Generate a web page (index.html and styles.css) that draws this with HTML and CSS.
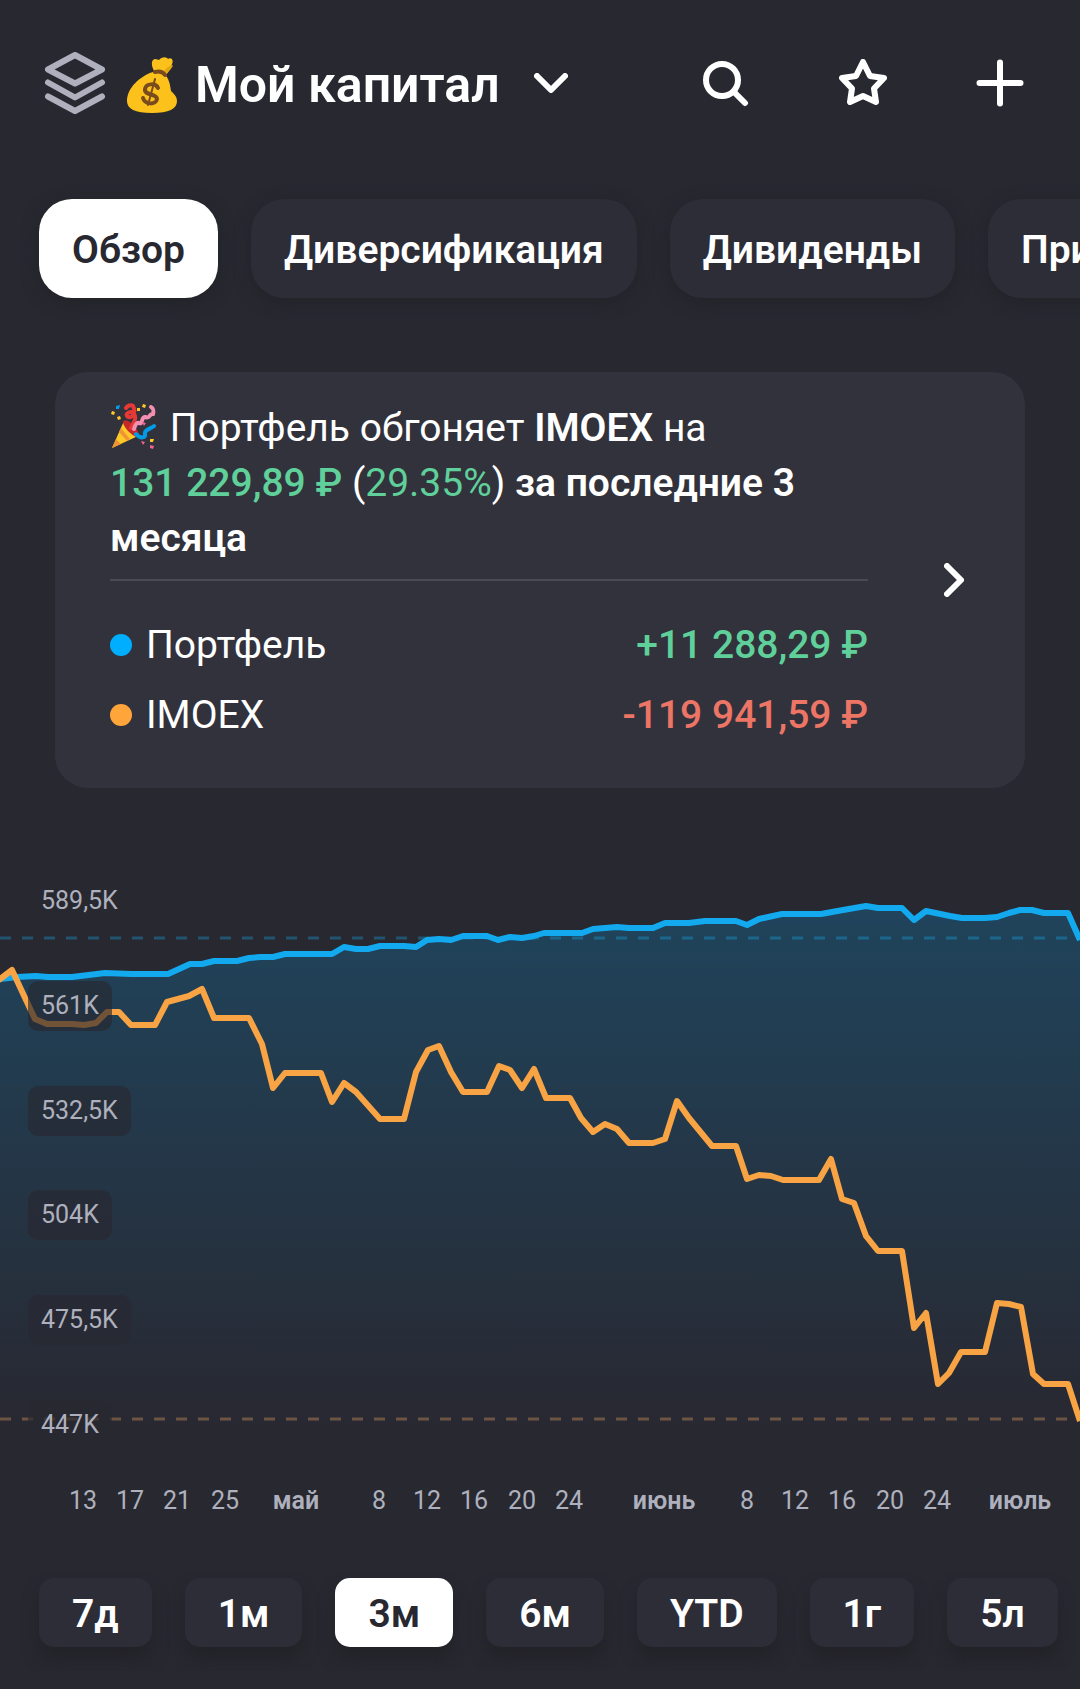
FILE: index.html
```
<!DOCTYPE html>
<html lang="ru">
<head>
  <meta charset="UTF-8">
  <meta name="viewport" content="width=device-width, initial-scale=1">
  <title>Мой капитал</title>
  <link rel="stylesheet" href="styles.css">
</head>
<body>

<header class="topbar">
  <button class="portfolio-picker">
    <svg class="layers" viewBox="0 0 62 62" aria-hidden="true">
      <path d="M31 3 L58 17.500 L31 31.500 L4 17.500 Z"/>
      <path d="M4 30.500 L31 45.500 L58 30.500"/>
      <path d="M4 44.500 L31 59 L58 44.500"/>
    </svg>
    <svg class="moneybag" viewBox="0 0 50 56" aria-hidden="true">
      <path fill="#fcc21b" d="M27 14 C24 8 24 3 28 2 C30 2 31 3 32 3 C35 -1 40 0 41 2 C44 0 47 3 45 7 C44 11 42 14 39 18 Z"/>
      <path fill="#e2a610" d="M37 14 C39 11 42 9 46 8 C45 12 41 15 39 17 Z"/>
      <path fill="#fcc21b" d="M26 15 C13 19 0 31 0 44 C0 52 8 56 25 56 C42 56 50 52 50 44 C50 39 46 36 44 34 C43 27 42 21 37 17 Z"/>
      <path fill="none" stroke="#7a4b1c" stroke-width="4" stroke-linecap="round" d="M28 15 C32 14 36 15 38 18"/>
      <path fill="none" stroke="#7a4b1c" stroke-width="4" stroke-linecap="round" d="M31 31 C29 26 19 26 18 32 C17 39 30 36 30 42 C29 48 18 48 16 41"/>
      <path fill="none" stroke="#7a4b1c" stroke-width="2" stroke-linecap="round" d="M28 22 L21 48"/>
    </svg>
    <span class="title">Мой капитал</span>
    <svg class="chevron-down" viewBox="0 0 34 20" aria-hidden="true"><path d="M3 3 L17 17 L31 3"/></svg>
  </button>
  <nav class="actions">
    <button aria-label="Поиск">
      <svg viewBox="0 0 48 48"><circle cx="20" cy="21" r="16"/><path d="M32 33 L43 44"/></svg>
    </button>
    <button aria-label="Избранное">
      <svg viewBox="0 0 48 48"><path d="M24 3 L31 17 L45 19 L35 29.500 L37 43 L24 37 L11 43 L13 29.500 L3 19 L17 17 Z"/></svg>
    </button>
    <button aria-label="Добавить">
      <svg viewBox="0 0 48 48"><path d="M24 3.500 V44.500 M3.500 24 H44.500"/></svg>
    </button>
  </nav>
</header>

<nav class="tabs">
  <button class="pill active">Обзор</button>
  <button class="pill">Диверсификация</button>
  <button class="pill">Дивиденды</button>
  <button class="pill">Прибыль</button>
</nav>

<a class="summary" href="#compare">
  <div class="summary-body">
    <p class="headline">
      <svg class="party" viewBox="0 0 46 46" aria-hidden="true">
        <path fill="#ffca28" d="M2 45 L14 18 C18 19 26 27 28 33 Z"/>
        <path fill="#f19534" d="M2 45 L6 36 L11 41 Z M11 25 L20 36 L17 38 L9 29 Z"/>
        <path fill="#c62828" d="M13 19 C15 15 21 19 25 24 C29 29 30 33 27 34 C23 34 13 24 13 19 Z"/>
        <path fill="none" stroke="#e53935" stroke-width="4" stroke-linecap="round" d="M21 25 C24 19 27 15 24 11 C22 7 15 10 17 13 C20 17 27 11 23 3 C21 1 17 3 16 5"/>
        <path fill="none" stroke="#f48fb1" stroke-width="4" stroke-linecap="round" d="M24 26 C25 22 27 19 29 20 C33 22 31 14 35 14 C41 16 38 11 43 11 C44 8 43 5 41 4"/>
        <path fill="none" stroke="#039be5" stroke-width="4" stroke-linecap="round" d="M26 31 C30 36 36 35 35 31 C34 27 40 26 44 23"/>
        <path fill="#ffca28" d="M2 8 l3 1 l-1 3 l-3 -1 Z M7 14 l3 -1 l1 3 l-3 1 Z M27 5 l3 0 l0 3 l-3 0 Z M33 1 l3 1 l-1 3 l-3 -1 Z M40 36 l4 0 l-1 3 l-3 0 Z"/>
        <path fill="#039be5" d="M6 3 l4 -1 l-1 4 l-3 0 Z"/>
        <path fill="#f06292" d="M32 19 l4 1 l-2 3 Z M31 38 l4 1 l-2 3 Z M40 42 l4 1 l-1 3 l-3 -1 Z"/>
      </svg>
      Портфель обгоняет <b>IMOEX</b> на
      <b class="up">131&nbsp;229,89&nbsp;₽</b> (<span class="up">29.35%</span>) <b>за последние 3 месяца</b>
    </p>
    <dl class="compare">
      <div class="row">
        <dt><span class="dot blue"></span>Портфель</dt>
        <dd class="up">+11 288,29 ₽</dd>
      </div>
      <div class="row">
        <dt><span class="dot orange"></span>IMOEX</dt>
        <dd class="down">-119 941,59 ₽</dd>
      </div>
    </dl>
  </div>
  <svg class="chevron-right" viewBox="0 0 20 34" aria-hidden="true"><path d="M3 3 L17 17 L3 31"/></svg>
</a>

<section class="chart">
  <svg class="plot" viewBox="0 860 1080 670" role="img" aria-label="Портфель и IMOEX за 3 месяца">
    <defs>
      <linearGradient id="fade" gradientUnits="userSpaceOnUse" x1="0" y1="905" x2="0" y2="1430">
        <stop offset="0" stop-color="#00aeff" stop-opacity="0.21"/>
        <stop offset="1" stop-color="#00aeff" stop-opacity="0"/>
      </linearGradient>
    </defs>
    <line class="level blue" x1="0" y1="938" x2="1080" y2="938"/>
    <line class="level orange" x1="0" y1="1419" x2="1080" y2="1419"/>
    <polygon fill="url(#fade)" points="0,1430 0,979 17,977 36,976 48,977 72,977 105,973 131,974 168,974 179,969 190,964 202,964 214,961 237,961 249,958 261,957 273,957 285,954 332,954 344,947 356,949 368,949 380,946 404,946 416,947 427,940 439,939 451,940 463,936 487,936 498,940 510,937 522,938 534,936 544,933 582,933 593,929 617,927 629,928 653,928 665,923 689,923 705,921 736,921 747,925 759,919 782,914 821,914 843,910 866,906 878,908 902,908 914,920 926,911 950,916 962,918 985,918 997,917 1009,913 1020,910 1032,910 1044,913 1068,913 1080,940 1080,1430"/>
    <polyline class="line blue" points="-4,980 0,979 17,977 36,976 48,977 72,977 105,973 131,974 168,974 179,969 190,964 202,964 214,961 237,961 249,958 261,957 273,957 285,954 332,954 344,947 356,949 368,949 380,946 404,946 416,947 427,940 439,939 451,940 463,936 487,936 498,940 510,937 522,938 534,936 544,933 582,933 593,929 617,927 629,928 653,928 665,923 689,923 705,921 736,921 747,925 759,919 782,914 821,914 843,910 866,906 878,908 902,908 914,920 926,911 950,916 962,918 985,918 997,917 1009,913 1020,910 1032,910 1044,913 1068,913 1080,940"/>
    <polyline class="line orange" points="-4,982 0,979 12,970 26,1000 35,1019 47,1024 72,1024 84,1025 96,1023 107,1012 119,1012 131,1025 155,1025 167,1002 189,996 202,989 214,1018 249,1018 262,1044 273,1088 285,1073 321,1073 332,1102 344,1083 356,1092 380,1119 404,1119 416,1072 428,1050 439,1046 451,1072 463,1092 487,1092 499,1066 510,1070 522,1088 534,1069 546,1098 570,1098 581,1118 593,1132 605,1124 617,1129 629,1143 653,1143 665,1139 677,1101 689,1118 712,1146 736,1146 747,1179 759,1175 771,1176 783,1180 819,1180 831,1159 842,1199 854,1203 866,1236 878,1251 902,1251 914,1328 926,1313 938,1384 949,1373 961,1352 985,1352 997,1303 1009,1304 1021,1307 1033,1374 1044,1384 1068,1384 1080,1421"/>
    <g class="dates">
      <text x="83" y="1509">13</text>
      <text x="130" y="1509">17</text>
      <text x="177" y="1509">21</text>
      <text x="225" y="1509">25</text>
      <text class="month" x="296" y="1509">май</text>
      <text x="379" y="1509">8</text>
      <text x="427" y="1509">12</text>
      <text x="474" y="1509">16</text>
      <text x="522" y="1509">20</text>
      <text x="569" y="1509">24</text>
      <text class="month" x="664" y="1509">июнь</text>
      <text x="747" y="1509">8</text>
      <text x="795" y="1509">12</text>
      <text x="842" y="1509">16</text>
      <text x="890" y="1509">20</text>
      <text x="937" y="1509">24</text>
      <text class="month" x="1020" y="1509">июль</text>
    </g>
  </svg>
  <div class="scale">
    <span>589,5K</span>
    <span>561K</span>
    <span>532,5K</span>
    <span>504K</span>
    <span>475,5K</span>
    <span>447K</span>
  </div>
</section>

<nav class="ranges">
  <button class="pill">7д</button>
  <button class="pill">1м</button>
  <button class="pill active">3м</button>
  <button class="pill">6м</button>
  <button class="pill">YTD</button>
  <button class="pill">1г</button>
  <button class="pill">5л</button>
</nav>

</body>
</html>
```
FILE: styles.css
```
* {
  box-sizing: border-box;
}
body {
  margin: 0;
  font-family: Roboto, "Noto Sans", sans-serif;
  background: #282831;
  color: #fff;
  overflow-x: hidden;
}
button {
  margin: 0;
  padding: 0;
  border: none;
  background: none;
  color: inherit;
  font-family: inherit;
  cursor: pointer;
}
svg {
  display: block;
  flex: none;
}

/* Header */
.topbar {
  display: flex;
  justify-content: space-between;
  align-items: center;
  padding: 52px 56px 0 44px;
}
.portfolio-picker {
  display: flex;
  align-items: center;
}
.layers, .chevron-down, .chevron-right, .actions svg {
  fill: none;
  stroke: #fff;
  stroke-width: 6;
  stroke-linecap: round;
  stroke-linejoin: round;
}
.layers {
  width: 62px;
  height: 62px;
  stroke: #aeb1bd;
}
.moneybag {
  width: 50px;
  height: 56px;
  margin: 4px 18px 0 21px;
}
.title {
  padding-top: 4px;
  font-size: 50px;
  line-height: 58px;
  font-weight: 600;
}
.chevron-down {
  width: 34px;
  height: 20px;
  margin-left: 34px;
}
.actions {
  display: flex;
  gap: 89px;
}
.actions svg {
  width: 48px;
  height: 48px;
}

/* Tabs and period buttons */
.tabs, .ranges {
  display: flex;
  gap: 33px;
  padding: 24px 39px;
  overflow-x: auto;
  scrollbar-width: none;
}
.tabs {
  margin-top: 61px;
}
.pill {
  flex: none;
  padding: 4px 33px 0;
  border-radius: 33px;
  background: #2d2d37;
  font-size: 39px;
  line-height: 95px;
  font-weight: 600;
  box-shadow: 0 4px 16px rgba(30, 30, 34, 0.6);
}
.pill.active {
  background: #fff;
  color: #282831;
}
.ranges .pill {
  border-radius: 15px;
  line-height: 65px;
  box-shadow: 0 12px 16px rgba(32, 32, 36, 0.7);
}

/* Comparison card */
.summary {
  display: flex;
  align-items: center;
  gap: 76px;
  margin: 50px 55px 0;
  padding: 0 61px 0 55px;
  border-radius: 33px;
  background: #32323c;
  color: inherit;
  text-decoration: none;
  font-size: 39px;
}
.summary-body {
  flex: 1;
  padding: 29px 0 38px;
}
.summary b {
  font-weight: 600;
}
.summary dd, .summary b.up {
  font-weight: 500;
}
.headline {
  margin: 0;
  padding-bottom: 13px;
  border-bottom: 2px solid #4a4a57;
  line-height: 55px;
}
.party {
  display: inline-block;
  width: 46px;
  height: 46px;
  margin-right: 4px;
  vertical-align: -8px;
}
.up {
  color: #5fd09a;
}
.down {
  color: #ec7565;
}
.compare {
  margin: 29px 0 0;
  line-height: 70px;
}
.row, .row dt {
  display: flex;
  align-items: center;
}
.row {
  justify-content: space-between;
}
.row dt {
  gap: 14px;
}
.row dd {
  margin: 0;
}
.dot {
  width: 22px;
  height: 22px;
  border-radius: 50%;
}
.dot.blue {
  background: #00aeff;
}
.dot.orange {
  background: #ffa53a;
}
.chevron-right {
  width: 20px;
  height: 34px;
}

/* Chart */
.chart {
  position: relative;
  margin-top: 72px;
}
.plot {
  width: 100%;
}
.line {
  fill: none;
  stroke-width: 6;
  stroke-linejoin: round;
}
.line.blue {
  stroke: #12a9ef;
}
.line.orange {
  stroke: #f8a444;
}
.level {
  stroke-width: 3;
  stroke-dasharray: 11 11;
}
.level.blue {
  stroke: #22546f;
}
.level.orange {
  stroke: #6c5443;
}
.dates text {
  fill: #aeb1bd;
  font-size: 25px;
  text-anchor: middle;
}
.dates .month {
  font-weight: 600;
}
/* value labels lie over the plot */
.scale {
  position: absolute;
  top: 16px;
  bottom: 80px;
  left: 28px;
  display: flex;
  flex-direction: column;
  justify-content: space-between;
  align-items: flex-start;
}
.scale span {
  padding: 0 13px;
  border-radius: 10px;
  background: rgba(40, 40, 49, 0.65);
  color: #aeb1bd;
  font-size: 25px;
  line-height: 50px;
}

.ranges {
  margin-top: 24px;
}
```
